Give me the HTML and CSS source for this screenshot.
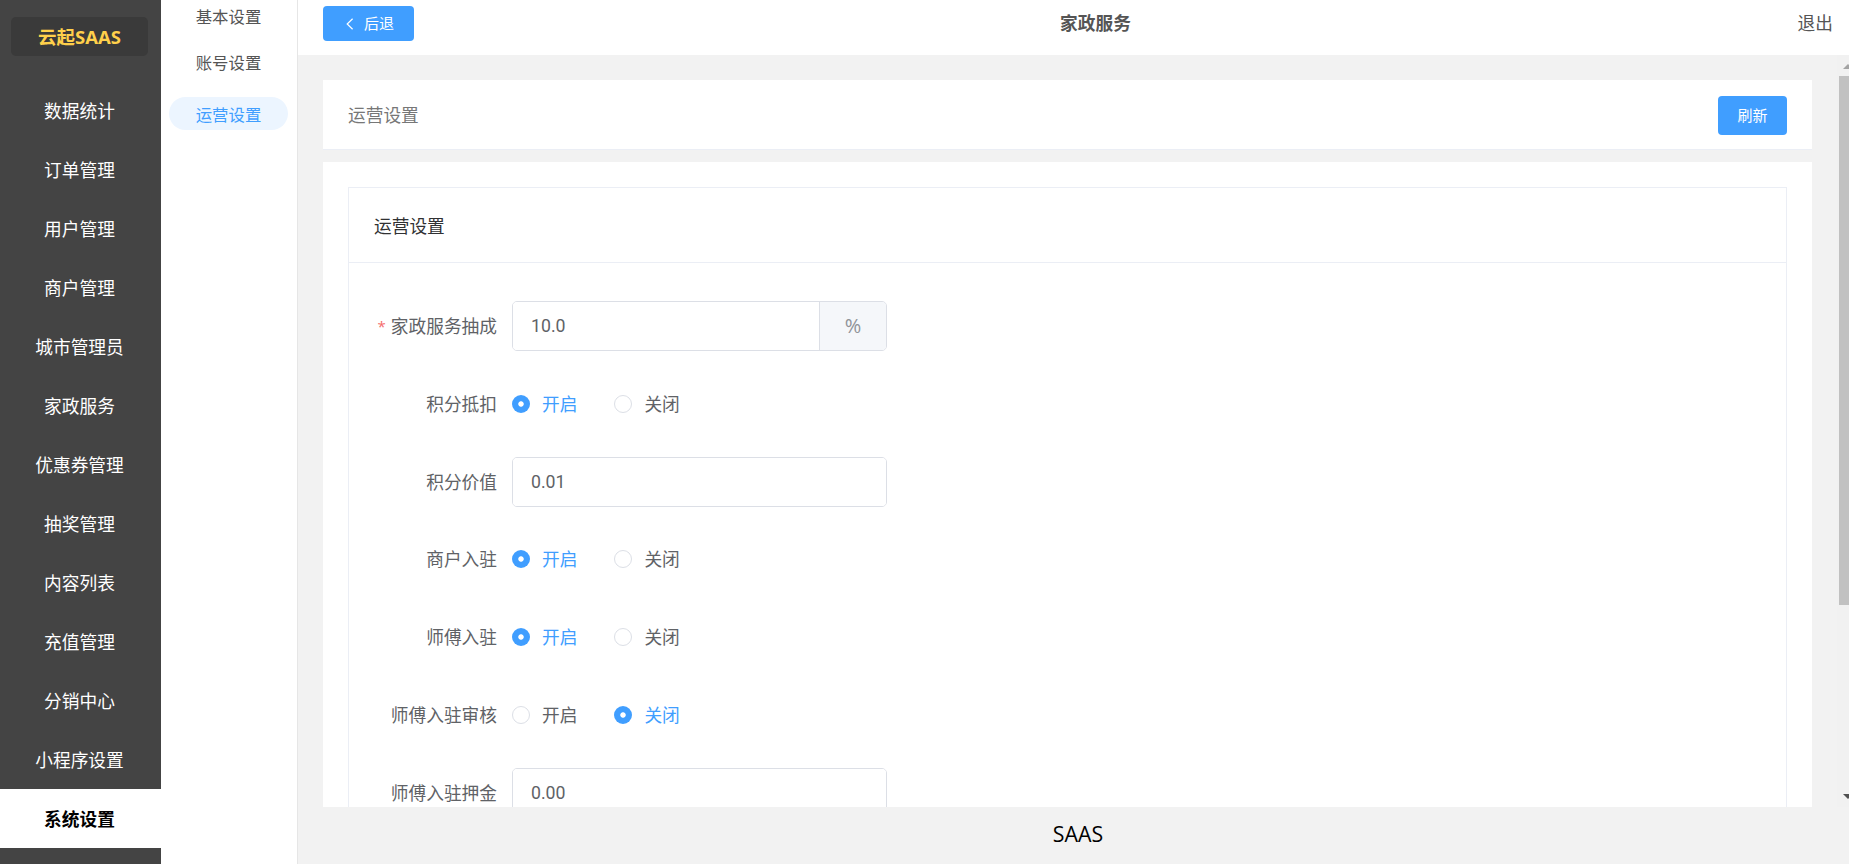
FILE: index.html
```
<!DOCTYPE html>
<html lang="zh-CN">
<head>
    <meta charset="UTF-8">
    <meta name="viewport" content="width=device-width, initial-scale=1.0">
    <title>云起SAAS</title>
    <link rel="stylesheet" href="styles.css">
</head>
<body>
    <div class="app">
      <div class="sidebar">
        <div class="logo">云起SAAS</div>
        <ul class="menu">
          <li>数据统计</li>
          <li>订单管理</li>
          <li>用户管理</li>
          <li>商户管理</li>
          <li>城市管理员</li>
          <li>家政服务</li>
          <li>优惠券管理</li>
          <li>抽奖管理</li>
          <li>内容列表</li>
          <li>充值管理</li>
          <li>分销中心</li>
          <li>小程序设置</li>
          <li class="active">系统设置</li>
        </ul>
      </div>
      <ul class="submenu">
        <li>基本设置</li>
        <li>账号设置</li>
        <li class="active">运营设置</li>
      </ul>
      <div class="main">
        <div class="header">
          <button class="btn back">
            <svg class="arrow" viewBox="0 0 8 12"><path d="M6.6 0.8 L1.2 6 L6.6 11.2"/></svg>
            <span>后退</span>
          </button>
          <h1>家政服务</h1>
          <a class="logout">退出</a>
        </div>
        <div class="body">
          <div class="content">
            <div class="titleBar">
              <span>运营设置</span>
              <button class="btn refresh">刷新</button>
            </div>
            <div class="panel">
              <div class="card">
                <div class="cardHeader">运营设置</div>
                <form class="form">
                  <div class="row">
                    <label class="required">家政服务抽成</label>
                    <div class="group">
                      <input type="text" value="10.0">
                      <span class="append">%</span>
                    </div>
                  </div>
                  <div class="row">
                    <label>积分抵扣</label>
                    <div class="radio checked"><i></i><span>开启</span></div>
                    <div class="radio"><i></i><span>关闭</span></div>
                  </div>
                  <div class="row">
                    <label>积分价值</label>
                    <div class="group"><input type="text" value="0.01"></div>
                  </div>
                  <div class="row">
                    <label>商户入驻</label>
                    <div class="radio checked"><i></i><span>开启</span></div>
                    <div class="radio"><i></i><span>关闭</span></div>
                  </div>
                  <div class="row">
                    <label>师傅入驻</label>
                    <div class="radio checked"><i></i><span>开启</span></div>
                    <div class="radio"><i></i><span>关闭</span></div>
                  </div>
                  <div class="row">
                    <label>师傅入驻审核</label>
                    <div class="radio"><i></i><span>开启</span></div>
                    <div class="radio checked"><i></i><span>关闭</span></div>
                  </div>
                  <div class="row">
                    <label>师傅入驻押金</label>
                    <div class="group"><input type="text" value="0.00"></div>
                  </div>
                </form>
              </div>
            </div>
          </div>
          <div class="scrollbar">
            <svg class="up" viewBox="0 0 10 5"><path d="M0 5 L5 0 L10 5 Z"/></svg>
            <div class="thumb"></div>
            <svg class="down" viewBox="0 0 10 5"><path d="M0 0 L5 5 L10 0 Z"/></svg>
          </div>
        </div>
        <div class="footer">SAAS</div>
      </div>
    </div>
</body>
</html>
```

FILE: styles.css
```
* {
  box-sizing: border-box;
}

body {
  margin: 0;
  overflow: hidden;
  font-family: "Open Sans", "Noto Sans CJK SC", sans-serif;
  font-size: 17.7px;
  color: #606266;
}

ul {
  margin: 0;
  padding: 0;
  list-style: none;
}

.app {
  display: flex;
  height: 864px;
  background-color: #fff;
}

.sidebar {
  width: 161px;
  padding-top: 17px;
  overflow: hidden;
  background-color: #444;
}

.logo {
  width: 137px;
  height: 39px;
  margin: 0 0 25px 11px;
  border-radius: 5px;
  background-color: #3a3a3a;
  color: #ffd04b;
  font-size: 18.5px;
  font-weight: bold;
  line-height: 40px;
  text-align: center;
}

.menu li {
  height: 59px;
  padding-right: 2px;
  color: #fff;
  line-height: 61px;
  text-align: center;
}

.menu li.active {
  background-color: #fff;
  color: #000;
  font-weight: bold;
}

.submenu {
  width: 137px;
  border-right: 1px solid #e6e6e6;
  font-size: 16.4px;
  text-align: center;
}

.submenu li {
  height: 33px;
  margin: 0 9px 13px 8px;
  color: #555;
  line-height: 33px;
}

.submenu li.active {
  margin-top: 18px;
  border-radius: 17px;
  background-color: #ecf5ff;
  color: #409eff;
  line-height: 35px;
}

.main {
  display: flex;
  flex: 1;
  flex-direction: column;
  min-width: 0;
  background-color: #f2f2f2;
}

.header {
  display: grid;
  grid-template-columns: 1fr auto 1fr;
  height: 55px;
  padding: 6px 16px 0 25px;
  background-color: #fff;
}

.header h1 {
  margin: 0;
  padding-left: 35px;
  color: #555;
  font-size: 17.7px;
  line-height: 35px;
}

.logout {
  justify-self: end;
  color: #555;
  line-height: 35px;
}

.btn {
  border: 0;
  border-radius: 4px;
  background-color: #409eff;
  color: #fff;
  font-family: inherit;
  font-size: 15px;
}

.back {
  display: flex;
  align-items: center;
  gap: 10px;
  width: 91px;
  height: 35px;
  padding: 0 0 0 23px;
}

.back span {
  padding-bottom: 2px;
}

.arrow {
  width: 8px;
  height: 12px;
  fill: none;
  stroke: #fff;
  stroke-width: 1.2;
}

.body {
  display: flex;
  height: 752px;
  overflow: hidden;
}

.content {
  flex: 1;
  padding: 25px 25px 0;
}

.titleBar {
  display: flex;
  align-items: center;
  justify-content: space-between;
  height: 70px;
  padding: 0 25px;
  border-bottom: 1px solid #ebeef5;
  background-color: #fff;
  color: #777;
}

.titleBar span {
  padding-bottom: 2px;
}

.refresh {
  width: 69px;
  height: 39px;
  margin-top: 2px;
  padding: 0 0 2px;
}

.panel {
  height: 1100px;
  margin-top: 12px;
  padding: 25px;
  background-color: #fff;
}

.card {
  height: 100%;
  border: 1px solid #ebeef5;
}

.cardHeader {
  height: 75px;
  padding-left: 25px;
  border-bottom: 1px solid #ebeef5;
  color: #303133;
  line-height: 76px;
}

.form {
  padding: 38px 25px 0;
}

.row {
  display: flex;
  align-items: center;
  height: 50px;
  margin-bottom: 27.8px;
}

.row label {
  width: 138px;
  padding: 0 15px 2px 0;
  text-align: right;
  white-space: nowrap;
}

.required::before {
  content: "*";
  margin-right: 5px;
  color: #f56c6c;
  font-size: 15px;
  vertical-align: 1px;
}

.group {
  display: flex;
  width: 375px;
  height: 50px;
  overflow: hidden;
  border: 1px solid #dcdfe6;
  border-radius: 5px;
}

.group input {
  flex: 1;
  min-width: 0;
  padding: 0 18px;
  border: 0;
  color: #606266;
  font-family: Roboto, sans-serif;
  font-size: 17.7px;
}

.append {
  width: 67px;
  border-left: 1px solid #dcdfe6;
  background-color: #f5f7fa;
  color: #909399;
  font-size: 20px;
  line-height: 48px;
  text-align: center;
}

.radio {
  display: flex;
  align-items: center;
  gap: 12px;
  margin-right: 37px;
}

.radio span {
  padding-bottom: 2px;
}

.radio i {
  width: 18px;
  height: 18px;
  border: 1px solid #dcdfe6;
  border-radius: 50%;
}

.radio.checked {
  color: #409eff;
}

/* thick ring leaves the small white dot in the middle */
.radio.checked i {
  border: none;
  background: radial-gradient(circle, #fff 2.3px, #409eff 3.1px);
}

.scrollbar {
  display: flex;
  flex-direction: column;
  align-items: center;
  width: 12px;
  padding: 9px 0 8px 2px;
  background-color: #f1f1f1;
}

.scrollbar svg {
  flex: none;
  width: 10px;
  height: 5px;
  margin-left: 8px;
}

.up {
  fill: #a3a3a3;
}

.down {
  margin-top: auto;
  fill: #505050;
}

.thumb {
  width: 10px;
  height: 529px;
  margin-top: 7px;
  background-color: #c1c1c1;
}

.footer {
  padding-left: 9px;
  color: #000;
  font-size: 21.3px;
  line-height: 53px;
  text-align: center;
}
```
